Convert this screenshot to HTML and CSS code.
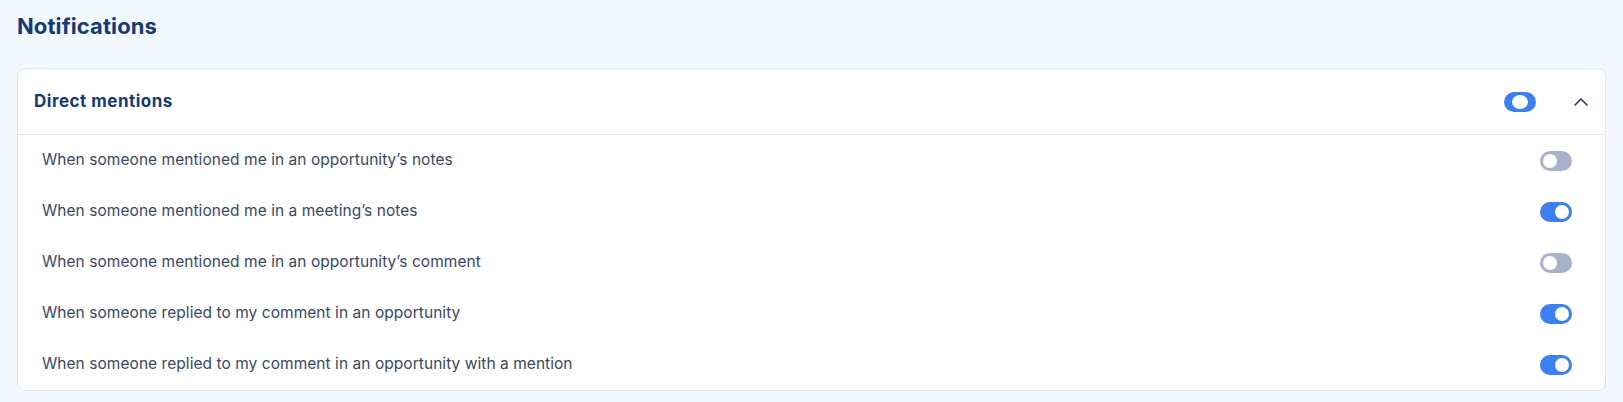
FILE: index.html
```html
<!DOCTYPE html>
<html lang="en">
<head>
    <meta charset="UTF-8">
    <meta name="viewport" content="width=device-width, initial-scale=1.0">
    <title>Notifications</title>
    <link rel="stylesheet" href="styles.css">
</head>
<body>
    <div class="page">
        <h1 class="page-title">Notifications</h1>

        <div class="settings-card">
            <div class="card-header">
                <span class="card-title">Direct mentions</span>
                <div class="header-actions">
                    <span class="toggle toggle-master"><span class="knob"></span></span>
                    <button class="collapse-button" aria-label="Collapse">
                        <svg width="14" height="9" viewBox="0 0 14 9" fill="none">
                            <path d="M1 8L7 2L13 8" stroke="#1e3a6e" stroke-width="1.6" stroke-linecap="round" stroke-linejoin="round"/>
                        </svg>
                    </button>
                </div>
            </div>

            <div class="setting-list">
                <div class="setting-row">
                    <span class="setting-label">When someone mentioned me in an opportunity’s notes</span>
                    <span class="toggle"><span class="knob"></span></span>
                </div>
                <div class="setting-row">
                    <span class="setting-label">When someone mentioned me in a meeting’s notes</span>
                    <span class="toggle on"><span class="knob"></span></span>
                </div>
                <div class="setting-row">
                    <span class="setting-label">When someone mentioned me in an opportunity’s comment</span>
                    <span class="toggle"><span class="knob"></span></span>
                </div>
                <div class="setting-row">
                    <span class="setting-label">When someone replied to my comment in an opportunity</span>
                    <span class="toggle on"><span class="knob"></span></span>
                </div>
                <div class="setting-row">
                    <span class="setting-label">When someone replied to my comment in an opportunity with a mention</span>
                    <span class="toggle on"><span class="knob"></span></span>
                </div>
            </div>
        </div>
    </div>
</body>
</html>
```

FILE: styles.css
```css
/* Page basics */
body {
    margin: 0;
    background-color: #f3f7fe;
    font-family: Inter, "Noto Sans", Arial, sans-serif;
    color: #3a4766;
}

.page {
    padding: 12px 17px 13px 17px;
}

.page-title {
    margin: 0 0 28px 0;
    font-size: 22px;
    line-height: 28px;
    font-weight: 700;
    letter-spacing: 0.1px;
    color: #163a78;
}

/* Card */
.settings-card {
    background-color: #fff;
    border: 1px solid #dce6f6;
    border-radius: 8px;
}

.card-header {
    display: flex;
    align-items: center;
    justify-content: space-between;
    height: 65px;
    padding: 0 13px 0 16px;
    border-bottom: 1px solid #dce6f6;
}

.card-title {
    font-size: 17px;
    font-weight: 700;
    letter-spacing: 0.5px;
    padding-bottom: 2px;
    color: #163a78;
}

.header-actions {
    display: flex;
    align-items: center;
    gap: 34px;
}

.collapse-button {
    background: none;
    border: none;
    padding: 0;
    width: 22px;
    height: 20px;
    display: flex;
    align-items: center;
    justify-content: center;
    cursor: pointer;
}

/* Rows */
.setting-row {
    display: flex;
    align-items: center;
    justify-content: space-between;
    height: 51px;
    padding: 0 33px 0 24px;
}

.setting-label {
    font-size: 15.5px;
    letter-spacing: 0.05px;
    padding-bottom: 3px;
    color: #3a4766;
}

/* Toggle switch */
.toggle {
    position: relative;
    display: inline-block;
    width: 32px;
    height: 20px;
    border-radius: 10px;
    background-color: #a8b2ca;
    flex-shrink: 0;
}

.toggle .knob {
    position: absolute;
    top: 3px;
    left: 3px;
    width: 14px;
    height: 14px;
    border-radius: 50%;
    background-color: #fff;
}

.toggle.on {
    background-color: #3b7ff0;
}

.toggle.on .knob {
    left: 15px;
}

/* master toggle sits mid-way */
.toggle-master {
    background-color: #3b7ff0;
}

.toggle-master .knob {
    left: 8px;
    width: 16px;
    top: 3px;
    height: 14px;
    border-radius: 50%;
}
```
